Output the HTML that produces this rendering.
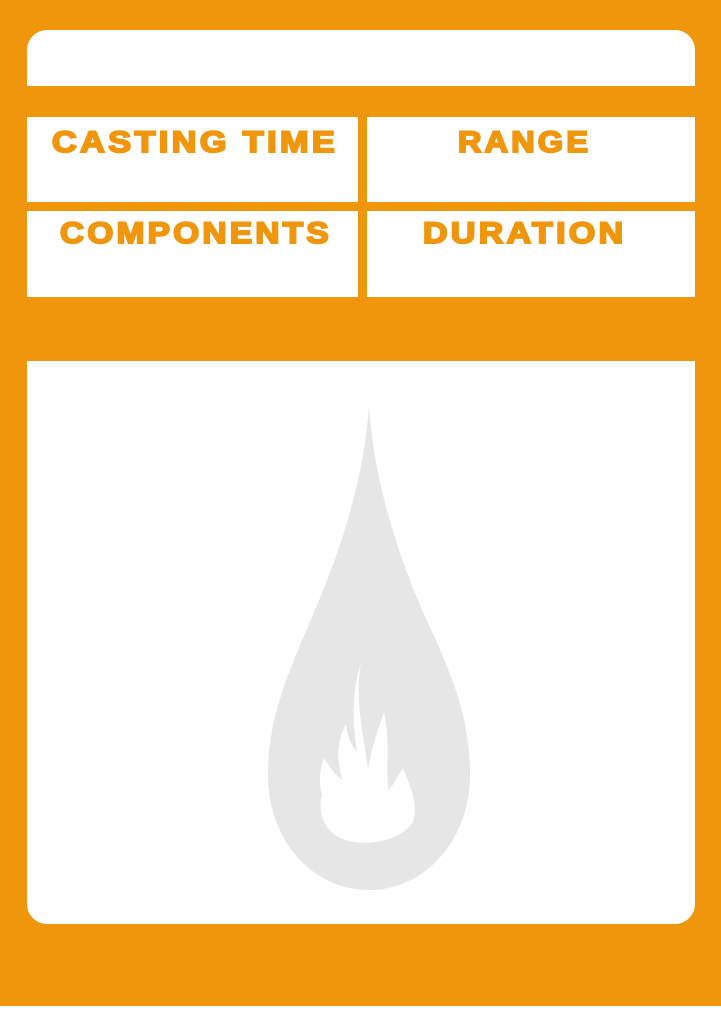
<!DOCTYPE html>
<html><head><style>
html,body{margin:0;padding:0;background:#fff;}
body{width:721px;height:1013px;position:relative;overflow:hidden;}
.bg{position:absolute;left:0;top:0;width:721px;height:1006px;background:#ef960d;}
.w{position:absolute;background:#fff;}
.t{position:absolute;font-family:"Liberation Sans",sans-serif;font-weight:bold;color:#ef960d;font-size:30px;letter-spacing:3px;-webkit-text-stroke:2px #ef960d;line-height:1;white-space:nowrap;transform-origin:left top;}
</style></head><body>
<div class="bg"></div>
<div class="w" style="left:27px;top:30px;width:668px;height:56px;border-radius:20px 20px 0 0;"></div>
<div class="w" style="left:27px;top:117px;width:331px;height:85px;"></div>
<div class="w" style="left:367px;top:117px;width:328px;height:85px;"></div>
<div class="w" style="left:27px;top:211px;width:331px;height:86px;"></div>
<div class="w" style="left:367px;top:211px;width:328px;height:86px;"></div>
<div class="w" style="left:27px;top:361px;width:668px;height:563px;border-radius:0 0 20px 20px;"></div>
<div class="t" style="left:52px;top:128px;transform:scaleX(1.14)">CASTING TIME</div>
<div class="t" style="left:458px;top:128px;transform:scaleX(1.08)">RANGE</div>
<div class="t" style="left:60px;top:219px;transform:scaleX(1.11)">COMPONENTS</div>
<div class="t" style="left:423px;top:219px;transform:scaleX(1.13)">DURATION</div>
<svg style="position:absolute;left:0;top:0" width="721" height="1013">
<path d="M369 405 C373 470 392 540 422 610 C455 680 470 720 470 775 C470 840 425 890 369 890 C312 890 268 840 268 775 C268 720 285 680 315 610 C345 540 365 470 369 405 Z" fill="#e6e6e6"/>
<path d="M361 663 C354 700 364 735 368 770 C372 745 378 730 384 712 C390 740 386 760 388 790 C394 785 398 775 403 768 C412 790 418 805 413 822 C405 834 390 840 375 842 C360 844 345 842 335 835 C322 825 318 810 322 795 C318 780 320 768 324 758 C330 768 336 775 342 780 C338 760 335 745 346 724 C348 740 352 745 357 752 C352 720 352 690 361 663 Z" fill="#fff"/>
</svg>
</body></html>
